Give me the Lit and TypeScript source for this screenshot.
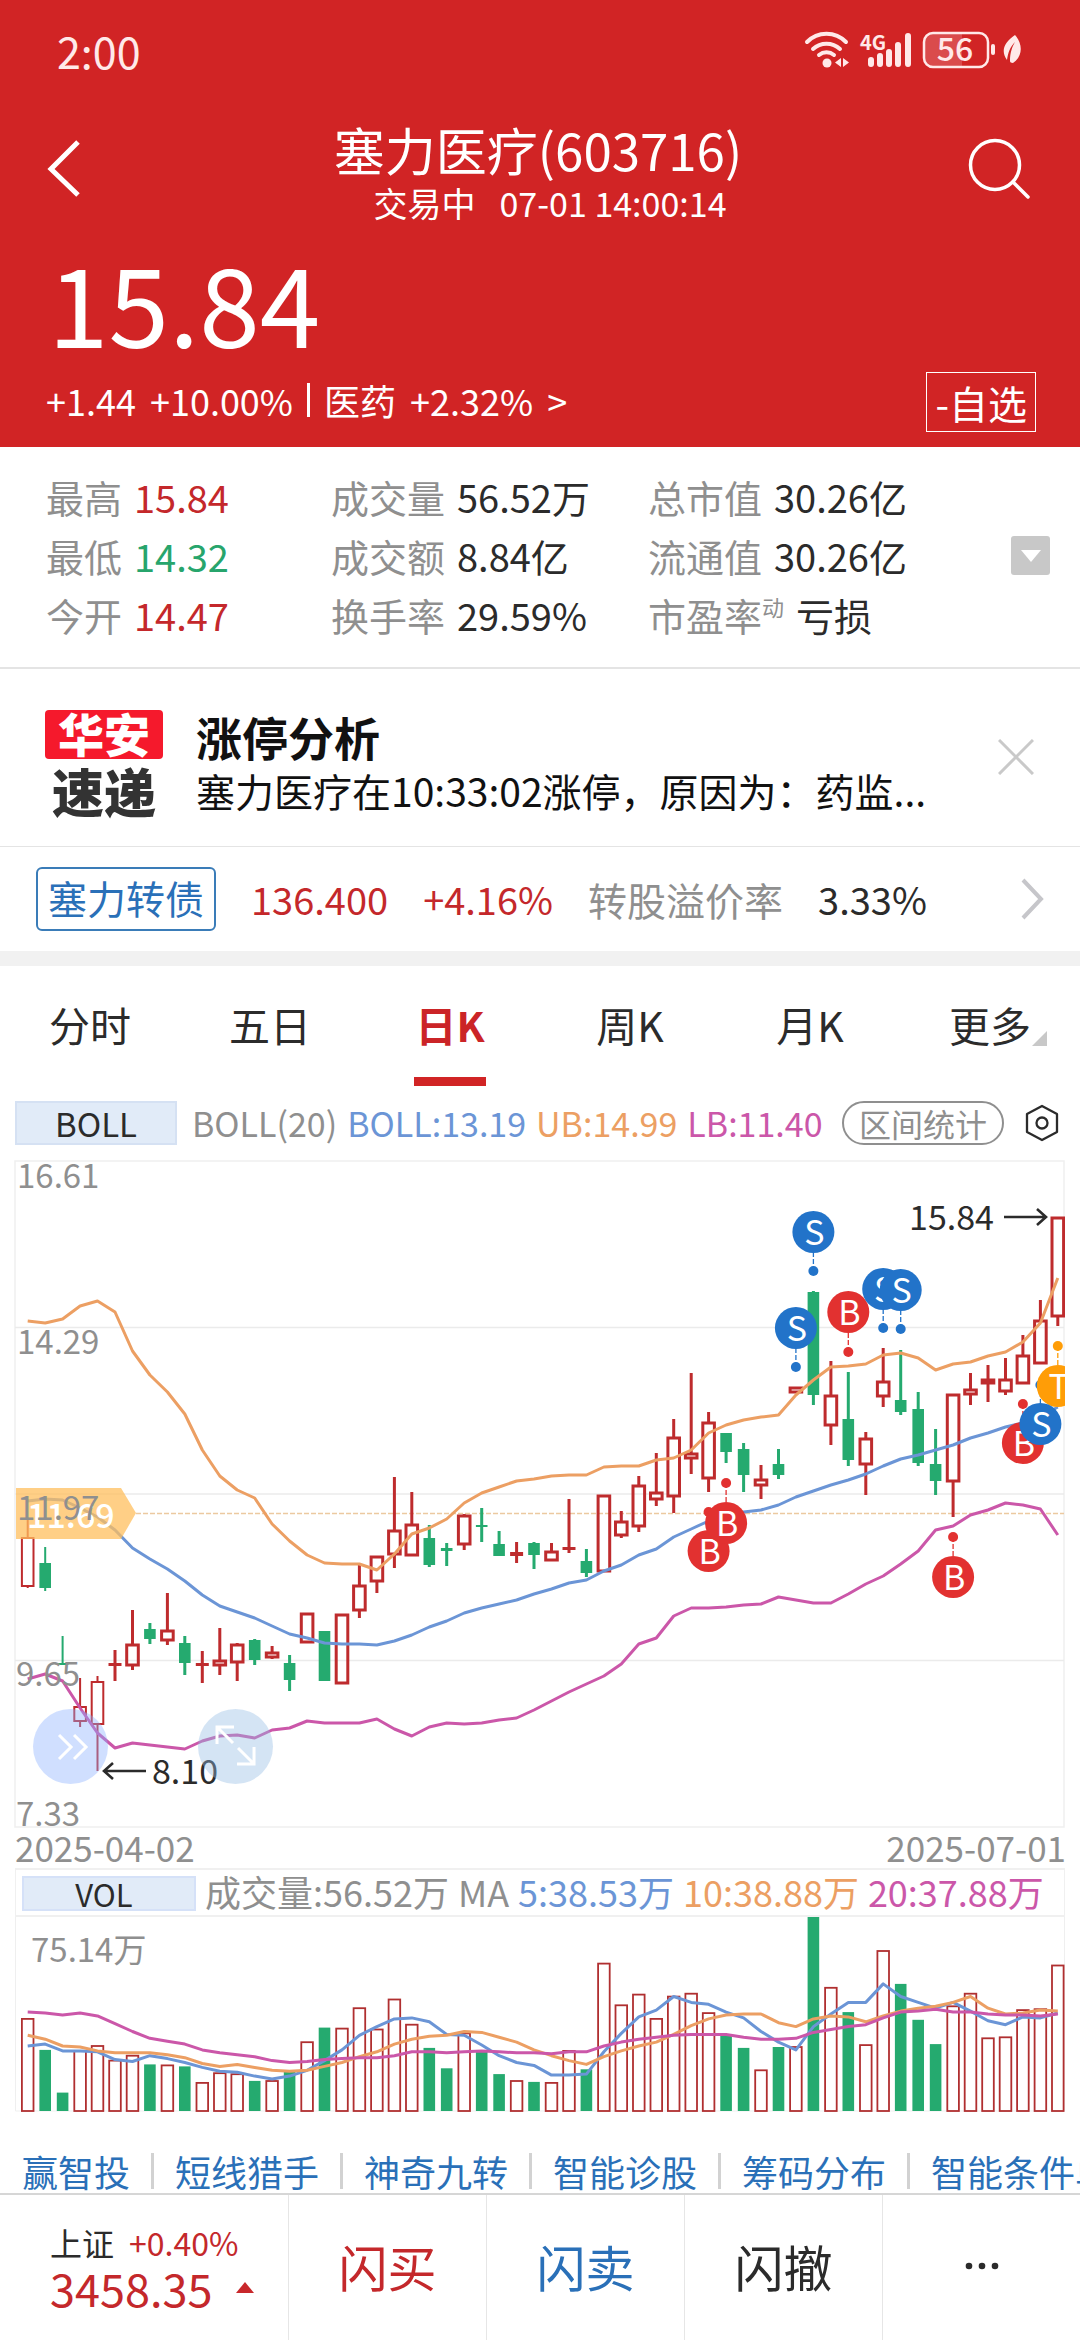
import { LitElement, html, svg, css } from "lit";
import { customElement, property } from "lit/decorators.js";
import { classMap } from "lit/directives/class-map.js";

/* One candle: direction, high, body top, body bottom, low (plot units, y down). */
type Candle = ["r" | "g", number, number, number, number];

const CANDLES: Candle[] = [
  ["r", 360, 377, 426, 428], ["g", 387, 403, 428, 431], ["g", 476, 503, 504, 504], ["r", 518, 546, 561, 567],
  ["r", 516, 521, 564, 611], ["r", 490, 504, 505, 521], ["r", 450, 484, 505, 510], ["g", 463, 469, 479, 484],
  ["r", 433, 470, 480, 485], ["g", 476, 483, 503, 515], ["r", 491, 504, 505, 523], ["r", 468, 500, 505, 515],
  ["r", 483, 484, 502, 521], ["g", 479, 480, 500, 505], ["r", 486, 492, 497, 499], ["g", 495, 503, 520, 531],
  ["r", 453, 453, 482, 483], ["g", 471, 471, 521, 521], ["r", 454, 454, 523, 523], ["r", 405, 425, 450, 458],
  ["r", 396, 396, 421, 433], ["r", 317, 370, 394, 408], ["r", 332, 364, 395, 395], ["g", 365, 378, 405, 407],
  ["g", 383, 388, 391, 406], ["r", 354, 355, 384, 390], ["g", 348, 365, 367, 382], ["g", 371, 384, 396, 396],
  ["r", 382, 393, 395, 403], ["g", 382, 383, 395, 409], ["r", 383, 391, 400, 401], ["r", 339, 388, 389, 393],
  ["g", 389, 401, 413, 417], ["r", 335, 335, 411, 411], ["r", 351, 361, 375, 378], ["r", 316, 325, 366, 372],
  ["r", 293, 332, 339, 346], ["r", 259, 277, 336, 353], ["r", 213, 293, 298, 314], ["r", 252, 262, 318, 332],
  ["g", 273, 273, 292, 303], ["g", 283, 289, 315, 332], ["r", 305, 319, 325, 339], ["g", 289, 304, 315, 319],
  ["r", 227, 227, 232, 232], ["g", 131, 132, 235, 245], ["r", 201, 235, 265, 285], ["g", 212, 259, 300, 306],
  ["r", 272, 278, 304, 335], ["r", 188, 221, 236, 247], ["g", 190, 240, 252, 255], ["g", 232, 249, 303, 306],
  ["g", 269, 304, 321, 335], ["r", 234, 234, 321, 357], ["r", 213, 229, 234, 245], ["r", 205, 219, 223, 242],
  ["r", 198, 219, 231, 235], ["r", 175, 195, 223, 224], ["r", 140, 160, 203, 204], ["r", 57, 57, 156, 166],
];

const UPPER = [161, 163, 159, 146, 141, 152, 191, 215, 232, 254, 290, 316, 330, 338, 364, 381, 395, 403, 404, 404,
  410, 394, 374, 368, 359, 343, 333, 327, 321, 319, 316, 315, 315, 307, 306, 306, 300, 298, 290, 273,
  265, 260, 257, 255, 235, 220, 207, 206, 204, 195, 193, 198, 210, 204, 202, 196, 192, 182, 163, 118];
const MIDDLE = [341, 339, 340, 348, 357, 370, 388, 399, 409, 421, 435, 446, 452, 458, 466, 474, 478, 483, 484, 484,
  485, 481, 475, 467, 461, 453, 448, 444, 440, 434, 429, 423, 420, 411, 405, 395, 389, 377, 369, 361,
  356, 352, 350, 345, 337, 331, 325, 320, 314, 306, 299, 295, 290, 285, 278, 273, 267, 263, 257, 247];
const LOWER = [519, 514, 521, 548, 573, 588, 583, 585, 587, 589, 581, 576, 575, 578, 570, 568, 561, 563, 563, 563,
  559, 569, 576, 567, 563, 564, 563, 560, 558, 550, 541, 532, 524, 516, 504, 484, 478, 456, 448, 448,
  447, 445, 444, 437, 440, 443, 443, 434, 424, 416, 404, 391, 370, 366, 355, 350, 343, 345, 349, 375];

/* Volume bars and averages on a 0–200 scale; the averages are measured from the top. */
const VOLUMES = [96, 63, 19, 63, 68, 53, 58, 48, 48, 46, 30, 40, 39, 31, 32, 41, 72, 86, 86, 107,
  85, 116, 90, 65, 44, 81, 61, 38, 32, 30, 30, 63, 43, 153, 110, 121, 96, 119, 122, 102,
  79, 65, 43, 66, 67, 200, 128, 102, 69, 166, 131, 94, 69, 109, 122, 76, 77, 105, 106, 151];
const MA5 = [133, 131, 138, 138, 139, 147, 149, 143, 146, 150, 155, 159, 160, 164, 167, 164, 158, 148, 137, 122,
  113, 105, 104, 108, 121, 122, 132, 143, 150, 153, 163, 163, 162, 139, 120, 103, 96, 82, 88, 90,
  98, 104, 118, 129, 137, 113, 100, 88, 88, 69, 82, 88, 94, 88, 97, 107, 111, 103, 104, 99];
const MA10 = [122, 126, 133, 134, 138, 140, 140, 140, 142, 145, 151, 154, 152, 155, 158, 159, 158, 154, 150, 144,
  139, 131, 126, 123, 122, 118, 119, 124, 129, 137, 143, 148, 152, 144, 138, 133, 129, 121, 112, 105,
  101, 100, 100, 109, 113, 105, 102, 103, 108, 102, 97, 94, 92, 88, 82, 94, 100, 99, 96, 97];
const MA20 = [98, 99, 101, 99, 102, 110, 118, 125, 128, 131, 137, 140, 142, 144, 148, 150, 149, 147, 146, 145,
  145, 143, 139, 139, 140, 139, 138, 139, 140, 140, 141, 139, 139, 133, 129, 126, 124, 122, 121, 121,
  121, 124, 126, 126, 125, 119, 116, 113, 111, 104, 98, 97, 95, 98, 98, 100, 101, 101, 102, 100];

/* Trade markers: letter, candle index, circle centre y, anchor dot y. */
const MARKERS: [string, number, number, number][] = [
  ["S", 44, 168, 207], ["S", 45, 72, 111], ["B", 47, 152, 192], ["S", 49, 129, 168], ["S", 50, 130, 169],
  ["B", 39, 391, 352], ["B", 40, 363, 323], ["B", 53, 417, 377],
  ["B", 57, 283, 244], ["T", 59, 226, 186], ["S", 58, 264, 225],
];

const STEP = 17.46;
const VOL_HEIGHT = 194;
const round = (n: number) => Math.round(n * 10) / 10;
const xAt = (i: number) => round(27.7 + i * STEP);
const volY = (v: number) => round((v * VOL_HEIGHT) / 200);
const points = (ys: number[]) => ys.map((y, i) => `${xAt(i)},${y}`).join(" ");

@customElement("status-bar")
export class StatusBar extends LitElement {
  static styles = css`
    :host { box-sizing: border-box; display: flex; align-items: center; justify-content: space-between; height: 104px; padding: 0 56px 4px 57px; color: #ffe9e9; }
    .time { font-size: 43px; line-height: 48px; }
    .icons { width: 222px; height: 44px; display: block; }
    .net { font-size: 20px; font-weight: 700; }
    .level { font-size: 32px; font-weight: 500; }
  `;
  render() {
    return html`
      <span class="time">2:00</span>
      <svg class="icons" viewBox="0 0 222 44" fill="currentColor" role="img" aria-label="4G 56">
        <g fill="none" stroke="currentColor" stroke-width="4" stroke-linecap="round">
          <path d="M5 14a27 27 0 0 1 39 0" /><path d="M11 21a20 20 0 0 1 27 0" /><path d="M17 27a12 12 0 0 1 15 0" />
        </g>
        <circle cx="25" cy="35" r="4.5" />
        <path d="M39 30v9l-6-4.500zM41 30v9l6-4.500z" />
        <text class="net" x="58" y="22">4G</text>
        <g fill="none" stroke="currentColor" stroke-width="6" stroke-linecap="round">
          <path d="M69 32v4M78 28v8M87 24v12M96 17v19M106 8v28" />
        </g>
        <path d="M130 5h30v34h-30a8 8 0 0 1-8-8v-18a8 8 0 0 1 8-8z" opacity=".2" />
        <rect x="122" y="5" width="64" height="34" rx="9" fill="none" stroke="currentColor" stroke-width="2.500" />
        <text class="level" x="153" y="33" text-anchor="middle">56</text>
        <rect x="189" y="16" width="4" height="11" rx="2" />
        <path d="M213 7c8 9 8 21-2 28-2 0-3-1-3-2 0-8 2-14 5-19-5 5-7 11-8 18-6-8-4-17 8-25z" />
      </svg>
    `;
  }
}

@customElement("quote-header")
export class QuoteHeader extends LitElement {
  static styles = css`
    :host { display: block; background: #d12425; color: #fff; }
    button { font: inherit; color: inherit; background: none; border: 0; padding: 0; margin: 0; cursor: pointer; }
    .nav { display: grid; grid-template-columns: 1fr auto 1fr; align-items: center; padding: 14px 48px 0 44px; }
    .nav svg { display: block; }
    .icon { justify-self: start; padding-bottom: 8px; }
    .search { justify-self: end; }
    .titles { text-align: center; }
    h1 { margin: 0; font-size: 51px; line-height: 62px; font-weight: 400; }
    .sub { display: flex; justify-content: center; gap: 24px; padding-left: 24px; font-size: 34px; line-height: 46px; }
    .price { margin: 19px 0 0 48px; font-size: 109px; line-height: 112px; }
    .row { display: flex; align-items: center; justify-content: space-between; padding: 15px 44px 15px 46px; }
    .change { display: flex; align-items: center; gap: 14px; padding-bottom: 5px; font-size: 36px; line-height: 54px; }
    .bar { width: 3px; height: 34px; background: #fff; }
    .change a { display: flex; gap: 14px; color: inherit; text-decoration: none; }
    .watch { box-sizing: border-box; height: 60px; padding: 0 8px; border: 1px solid #fff; font-size: 39px; line-height: 52px; }
  `;
  render() {
    return html`
      <status-bar></status-bar>
      <div class="nav">
        <button class="icon" aria-label="返回">
          <svg width="40" height="60" viewBox="0 0 40 60" fill="none" stroke="#fff" stroke-width="5"><path d="M34 4 7 31l27 26" /></svg>
        </button>
        <div class="titles">
          <h1>塞力医疗(603716)</h1>
          <div class="sub"><span>交易中</span><span>07-01 14:00:14</span></div>
        </div>
        <button class="icon search" aria-label="搜索">
          <svg width="66" height="66" viewBox="0 0 66 66" fill="none" stroke="#fff" stroke-width="3.500" stroke-linecap="round">
            <circle cx="29" cy="30" r="24.500" /><path d="m47 47 15 15" />
          </svg>
        </button>
      </div>
      <div class="price">15.84</div>
      <div class="row">
        <div class="change">
          <span>+1.44</span><span>+10.00%</span><span class="bar"></span>
          <a href="#sector"><span>医药</span><span>+2.32%</span><span>&gt;</span></a>
        </div>
        <button class="watch">-自选</button>
      </div>
    `;
  }
}

@customElement("quote-stats")
export class QuoteStats extends LitElement {
  static styles = css`
    :host { display: block; border-bottom: 2px solid #e4e4e4; }
    .grid {
      display: grid; grid-template-columns: 285fr 317fr 363fr 39px; align-items: center;
      padding: 20px 30px 23px 46px; font-size: 38px; line-height: 59px;
    }
    .col { margin: 0; }
    .item { display: flex; gap: 12px; white-space: nowrap; }
    dt { color: #8f8f8f; }
    dd { margin: 0; color: #2b2b2b; }
    dd.up { color: #c4282b; }
    dd.down { color: #27a56c; }
    sup { font-size: 22px; line-height: 22px; vertical-align: 15px; }
    button { width: 39px; height: 39px; padding: 0; border: 0; border-radius: 3px; background: #c8c8c8; cursor: pointer; }
    svg { display: block; margin: auto; }
  `;
  private item(label: unknown, value: string, tone = "") {
    return html`<div class="item"><dt>${label}</dt><dd class=${tone}>${value}</dd></div>`;
  }
  render() {
    return html`
      <div class="grid">
        <dl class="col">${this.item("最高", "15.84", "up")}${this.item("最低", "14.32", "down")}${this.item("今开", "14.47", "up")}</dl>
        <dl class="col">${this.item("成交量", "56.52万")}${this.item("成交额", "8.84亿")}${this.item("换手率", "29.59%")}</dl>
        <dl class="col">
          ${this.item("总市值", "30.26亿")}${this.item("流通值", "30.26亿")}${this.item(html`市盈率<sup>动</sup>`, "亏损")}
        </dl>
        <button aria-label="展开"><svg width="20" height="12" viewBox="0 0 20 12" fill="#fff"><path d="M0 0h20L10 12z" /></svg></button>
      </div>
    `;
  }
}

@customElement("news-flash")
export class NewsFlash extends LitElement {
  static styles = css`
    :host { display: flex; align-items: center; padding: 41px 46px 28px 45px; border-bottom: 1px solid #e4e4e4; }
    .logo { flex: none; width: 118px; height: 108px; display: flex; flex-direction: column; gap: 11px; text-align: center; }
    .logo b { display: block; height: 49px; font-weight: 900; }
    .brand { border-radius: 4px; background: #f5192c; color: #fff; font-size: 46px; line-height: 44px; }
    .kind { color: #333; font-size: 52px; line-height: 42px; }
    .text { flex: 1; min-width: 0; margin-left: 33px; color: #111; }
    h2 { margin: 0; font-size: 46px; line-height: 52px; }
    p { margin: 0; font-size: 39px; line-height: 56px; white-space: nowrap; overflow: hidden; }
    button { background: none; border: 0; padding: 0 0 14px; cursor: pointer; }
    svg { display: block; }
  `;
  render() {
    return html`
      <div class="logo"><b class="brand">华安</b><b class="kind">速递</b></div>
      <div class="text">
        <h2>涨停分析</h2>
        <p>塞力医疗在10:33:02涨停，原因为：药监...</p>
      </div>
      <button aria-label="关闭"><svg width="36" height="36" viewBox="0 0 36 36" stroke="#c9c9c9" stroke-width="3"><path d="m1 1 34 34M35 1 1 35" /></svg></button>
    `;
  }
}

@customElement("bond-row")
export class BondRow extends LitElement {
  static styles = css`
    :host { display: flex; align-items: center; height: 104px; padding: 0 34px 0 36px; font-size: 39px; line-height: 56px; border-bottom: 15px solid #f1f1f1; white-space: nowrap; }
    .bond { box-sizing: border-box; height: 64px; padding: 0 10px; border: 2px solid #3a7cb8; border-radius: 6px; color: #2a70b8; text-decoration: none; }
    .num { font-size: 38px; }
    .up { color: #c4282b; }
    .gap { margin-left: 35px; }
    .label { color: #8f8f8f; }
    .value { color: #2b2b2b; flex: 1; }
    svg { display: block; }
  `;
  render() {
    return html`
      <a class="bond" href="#bond">塞力转债</a>
      <span class="num up gap">136.400</span><span class="num up gap">+4.16%</span>
      <span class="label gap">转股溢价率</span><span class="num value gap">3.33%</span>
      <svg width="26" height="44" viewBox="0 0 26 44" fill="none" stroke="#c6c6ca" stroke-width="4"><path d="m3 3 18 19L3 41" /></svg>
    `;
  }
}

@customElement("period-tabs")
export class PeriodTabs extends LitElement {
  static styles = css`
    :host { display: block; }
    .tabs { display: flex; }
    button {
      flex: 1; position: relative; height: 120px; padding: 0 0 5px; border: 0; background: none; cursor: pointer;
      font: inherit; font-size: 41px; line-height: 60px; color: #2b2b2b;
    }
    .on { color: #cb2427; font-weight: 700; }
    .on::after { content: ""; position: absolute; left: 50%; bottom: 0; width: 72px; height: 9px; margin-left: -36px; background: #d12425; }
    .corner { position: absolute; right: 33px; top: 65px; width: 15px; height: 15px; background: #c8c8c8; clip-path: polygon(100% 0, 100% 100%, 0 100%); }
  `;
  render() {
    const tabs = ["分时", "五日", "日K", "周K", "月K", "更多"];
    return html`<div class="tabs" role="tablist">
      ${tabs.map((t) => html`<button role="tab" aria-selected=${t === "日K"} class=${classMap({ on: t === "日K" })}>
        ${t}${t === "更多" ? html`<span class="corner"></span>` : ""}
      </button>`)}
    </div>`;
  }
}

@customElement("kline-chart")
export class KlineChart extends LitElement {
  @property({ attribute: false }) candles = CANDLES;

  static styles = css`
    :host { display: block; }
    button { font: inherit; margin: 0; cursor: pointer; }
    .legend { display: flex; align-items: center; margin: 15px 20px 15px 15px; font-size: 34px; line-height: 40px; white-space: nowrap; }
    .pick { box-sizing: border-box; height: 44px; width: 162px; padding: 0; border: 2px solid #d5e1f3; background: #e1ebf8; color: #2b2b2b; font-size: 33px; line-height: 36px; margin-right: 15px; }
    .muted { color: #8f8f8f; }
    .blue { color: #6b95d6; }
    .orange { color: #ec9f63; }
    .pink { color: #cb57a9; }
    .values { display: flex; gap: 10px; flex: 1; }
    .pill { box-sizing: border-box; height: 44px; padding: 0 15px; border: 2px solid #8f8f8f; border-radius: 22px; background: none; color: #8f8f8f; font-size: 32px; line-height: 36px; }
    .gear { padding: 0; border: 0; background: none; margin-left: 20px; }
    .gear svg, .plot svg { display: block; }
    .plot { position: relative; }
    .plot > svg { width: 100%; height: auto; }
    .axis { font-size: 33px; fill: #8f8f8f; }
    .note { font-size: 34px; fill: #2b2b2b; }
    .tag { font-size: 34px; font-weight: 500; fill: #fff; }
    .mark { font-size: 34px; fill: #fff; }
    .round { position: absolute; top: 82.2%; width: 6.95%; aspect-ratio: 1; padding: 0; border: 0; border-radius: 50%; }
    .round svg { width: 100%; height: 100%; }
    .next { left: 3.06%; background: rgba(137, 175, 255, 0.4); }
    .full { left: 18.34%; background: rgba(147, 187, 227, 0.4); }
    .dates { display: flex; justify-content: space-between; padding: 0 14px 0 15px; font-size: 35px; line-height: 38px; padding-bottom: 2px; color: #8f8f8f; }
    .volhead { display: flex; align-items: flex-start; gap: 9px; height: 45px; margin: 0 15px; padding-left: 6px; border: 2px solid #f0f0f0; border-width: 2px 1px; font-size: 36px; line-height: 43px; white-space: nowrap; }
    .volpick { box-sizing: border-box; width: 174px; height: 35px; margin-top: 6px; padding: 0 10px 0 0; border: 2px solid #d5e1f8; background: #e1ebf8; color: #2b2b2b; font-size: 31px; line-height: 26px; }
  `;

  private candle([dir, hi, top, bot, lo]: Candle, i: number) {
    const x = xAt(i);
    const w = i < 5 ? 2 : 3;
    const h = bot - top;
    if (dir === "g") {
      return svg`<g fill="#25aa6f"><rect x=${x - w / 2} y=${hi} width=${w} height=${lo - hi} /><rect x=${x - 5.8} y=${top} width="11.6" height=${Math.max(h, 2)} /></g>`;
    }
    const body = h <= 2
      ? svg`<path d=${`M${x - 6.5} ${top + h / 2}h13`} stroke-width=${h + 2} />`
      : svg`<rect x=${x - 5.8} y=${top + 1} width="11.6" height=${h - 1} />`;
    return svg`<g fill="none" stroke="#be2b2d" stroke-width=${w}><path d=${`M${x} ${hi}V${top}M${x} ${bot}V${lo}`} />${body}</g>`;
  }

  private color(letter: string) {
    return letter === "S" ? "#2273c9" : letter === "B" ? "#e23130" : "#ff9d07";
  }

  private price() {
    return html`<svg viewBox="0 0 1080 668">
      <defs><clipPath id="area"><rect x="0" y="0" width="1065" height="668" /></clipPath></defs>
      <g fill="none" stroke="#efefef" stroke-width="2">
        <rect x="15" y="1" width="1049" height="666" stroke-width="1.500" />
        <path d="M15 167.500H1064M15 334H1064M15 500.500H1064" stroke="#ebebeb" stroke-width="1.500" />
      </g>
      <path d="M136 353.500H1064" stroke="#ecc9a0" stroke-width="1.300" stroke-dasharray="5 2" />
      <g clip-path="url(#area)">
        ${this.candles.map((c, i) => this.candle(c, i))}
        <g fill="none" stroke-width="3" stroke-linejoin="round">
          <polyline points=${points(MIDDLE)} stroke="#6b95d6" />
          <polyline points=${points(UPPER)} stroke="#ec9f63" />
          <polyline points=${points(LOWER)} stroke="#cb57a9" />
        </g>
      </g>
      <path d="M16 328h105l15 25-15 26H16z" fill="#ffbf5e" opacity=".75" />
      <text class="tag" x="27" y="368">11.69</text>
      <text class="axis" x="17" y="28">16.61</text><text class="axis" x="17" y="194">14.29</text>
      <text class="axis" x="17" y="360">11.97</text><text class="axis" x="16" y="526">9.65</text>
      <text class="axis" x="16" y="666">7.33</text>
      <g fill="none" stroke="#2b2b2b" stroke-width="2.600"><path d="M1004 57h42M1037 49l9 8-9 8" /><path d="M146 611h-42M113 603l-9 8 9 8" /></g>
      <text class="note" x="994" y="70" text-anchor="end">15.84</text>
      <text class="note" x="152" y="624">8.10</text>
      <g clip-path="url(#area)">
        ${MARKERS.map(([l, i, y, dot]) => svg`<g fill=${this.color(l)} stroke=${this.color(l)}>
          <circle cx=${xAt(i)} cy=${dot} r="5" stroke="none" />
          <path d=${`M${xAt(i)} ${dot}V${y}`} stroke-width="1.300" stroke-dasharray="5 2" /></g>`)}
        ${MARKERS.map(([l, i, y]) => svg`<circle cx=${xAt(i)} cy=${y} r="21" fill=${this.color(l)} />
          <text class="mark" x=${xAt(i) + 1} y=${y + 13} text-anchor="middle">${l}</text>`)}
      </g>
    </svg>`;
  }

  private volume() {
    const line = (ys: number[], color: string) => svg`<polyline points=${points(ys.map(volY))} stroke=${color} />`;
    return html`<svg viewBox="0 0 1080 196">
      <path d="M15.500 0V194H1064.500V0" fill="none" stroke="#efefef" />
      ${VOLUMES.map((v, i) => this.candles[i][0] === "g"
        ? svg`<rect x=${xAt(i) - 5.8} y=${VOL_HEIGHT - volY(v)} width="11.6" height=${volY(v)} fill="#25aa6f" />`
        : svg`<rect x=${xAt(i) - 5.8} y=${VOL_HEIGHT + 1 - volY(v)} width="11.6" height=${volY(v) - 1} fill="none" stroke="#b02f30" stroke-width="1.800" />`)}
      <g fill="none" stroke-width="3" stroke-linejoin="round">
        ${line(MA5, "#6b95d6")}${line(MA10, "#ec9f63")}${line(MA20, "#cb57a9")}
      </g>
      <text class="axis" x="31" y="45">75.14万</text>
    </svg>`;
  }

  render() {
    return html`
      <div class="legend">
        <button class="pick">BOLL</button>
        <div class="values">
          <span class="muted">BOLL(20)</span><span class="blue">BOLL:13.19</span>
          <span class="orange">UB:14.99</span><span class="pink">LB:11.40</span>
        </div>
        <button class="pill">区间统计</button>
        <button class="gear" aria-label="指标设置">
          <svg width="36" height="40" viewBox="0 0 36 40" fill="none" stroke="#2b2b2b" stroke-width="2.300" stroke-linejoin="round">
            <path d="M18 3 33 11v18l-15 8-15-8V11z" /><circle cx="18" cy="20" r="5.500" />
          </svg>
        </button>
      </div>
      <div class="plot">
        ${this.price()}
        <button class="round next" aria-label="下一页">
          <svg viewBox="0 0 75 75" fill="none" stroke="#fff" stroke-width="3"><path d="m26 26 12 12-12 12M41 26l12 12-12 12" /></svg>
        </button>
        <button class="round full" aria-label="全屏">
          <svg viewBox="0 0 75 75" fill="none" stroke="#fff" stroke-width="3"><path d="M36 18H19v17M19 18l16 16M39 55h17V38M56 55 40 39" /></svg>
        </button>
      </div>
      <div class="dates"><span>2025-04-02</span><span>2025-07-01</span></div>
      <div class="volhead">
        <button class="volpick">VOL</button>
        <span class="muted">成交量:56.52万</span><span class="muted">MA</span>
        <span class="blue">5:38.53万</span><span class="orange">10:38.88万</span><span class="pink">20:37.88万</span>
      </div>
      <div class="plot">${this.volume()}</div>
    `;
  }
}

@customElement("tool-links")
export class ToolLinks extends LitElement {
  static styles = css`
    :host { display: block; padding: 40px 0 4px 22px; overflow: hidden; }
    nav { display: flex; white-space: nowrap; font-size: 36px; line-height: 36px; }
    a { flex: none; color: #2a70b8; text-decoration: none; }
    a + a { margin-left: 21px; padding-left: 21px; border-left: 3px solid #d2d2d2; }
  `;
  render() {
    const links = ["赢智投", "短线猎手", "神奇九转", "智能诊股", "筹码分布", "智能条件单"];
    return html`<nav>${links.map((l) => html`<a href="#tool">${l}</a>`)}</nav>`;
  }
}

@customElement("trade-bar")
export class TradeBar extends LitElement {
  static styles = css`
    :host { display: grid; grid-template-columns: 288fr 198fr 198fr 198fr 198fr; height: 145px; border-top: 2px solid #d6d6d6; }
    .cell { font: inherit; font-size: 49px; line-height: 60px; border: 0; border-left: 1px solid #e6e6e6; background: none; padding: 0 0 4px; margin: 0; color: #2b2b2b; cursor: pointer; }
    .index { border-left: 0; padding: 0 0 2px 50px; text-align: left; color: #c4282b; text-decoration: none; display: flex; flex-direction: column; justify-content: center; }
    .top { display: flex; gap: 15px; font-size: 32px; line-height: 42px; }
    .name { color: #2b2b2b; }
    .bottom { display: flex; align-items: center; gap: 24px; font-size: 45px; line-height: 50px; }
    .buy { color: #c4282b; }
    .sell { color: #2a70b8; }
    svg { display: block; }
    .dots { margin: auto; }
  `;
  render() {
    return html`
      <a class="cell index" href="#index">
        <span class="top"><span class="name">上证</span><span>+0.40%</span></span>
        <span class="bottom"><span>3458.35</span><svg width="18" height="11" viewBox="0 0 18 11" fill="#c8282b"><path d="M9 0l9 11H0z" /></svg></span>
      </a>
      <button class="cell buy">闪买</button>
      <button class="cell sell">闪卖</button>
      <button class="cell">闪撤</button>
      <button class="cell" aria-label="更多"><svg class="dots" width="36" height="8" viewBox="0 0 36 8" fill="#2b2b2b"><circle cx="5" cy="4" r="3.300" /><circle cx="18" cy="4" r="3.300" /><circle cx="31" cy="4" r="3.300" /></svg></button>
    `;
  }
}

@customElement("app-root")
export class AppRoot extends LitElement {
  static styles = css`
    :host { display: block; background: #fff; font-family: "Noto Sans CJK SC", "Noto Sans", sans-serif; overflow: hidden; }
  `;
  render() {
    return html`
      <quote-header></quote-header>
      <quote-stats></quote-stats>
      <news-flash></news-flash>
      <bond-row></bond-row>
      <period-tabs></period-tabs>
      <kline-chart></kline-chart>
      <tool-links></tool-links>
      <trade-bar></trade-bar>
    `;
  }
}
